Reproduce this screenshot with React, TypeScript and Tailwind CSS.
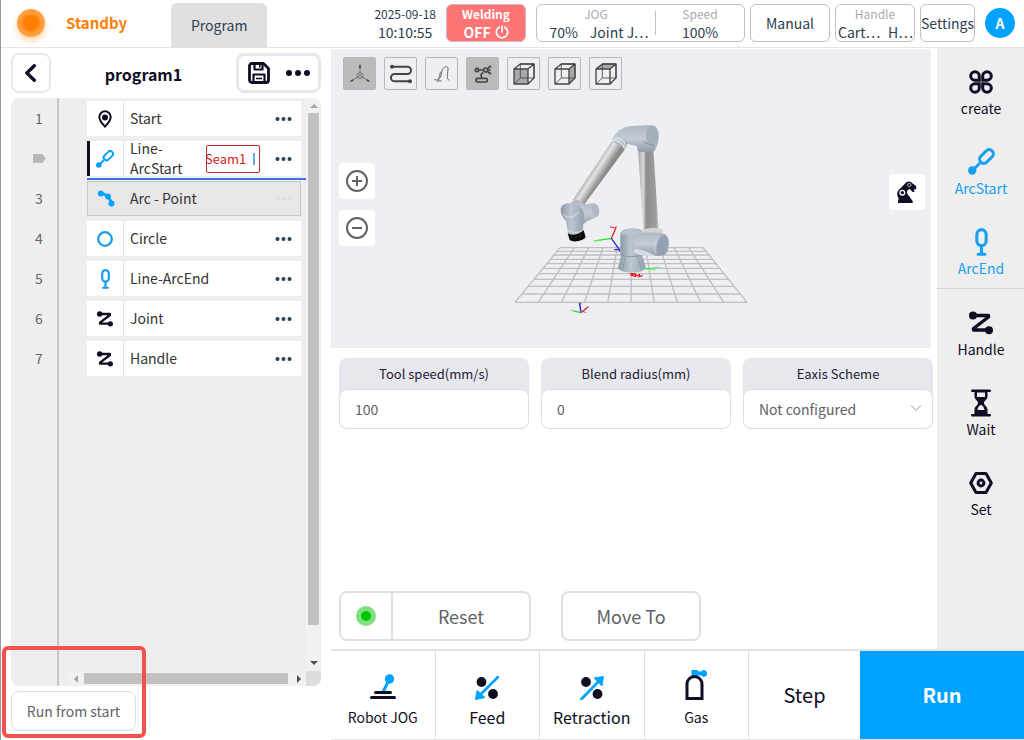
import React from 'react';
import { ChevronDown } from 'lucide-react';

type IconProps = { className?: string };

const BackIcon: React.FC = () => (
  <svg viewBox="0 0 14 20" className="w-[13px] h-5" fill="none" stroke="#0f0d23" strokeWidth="3.6" strokeLinecap="round" strokeLinejoin="round">
    <path d="M10 2.200 2 10l8 7.800" />
  </svg>
);

const SaveIcon: React.FC = () => (
  <svg viewBox="0 0 22 22" className="w-[22px] h-[22px]" fill="none" stroke="#0f0d23" strokeWidth="2.8" strokeLinejoin="round">
    <path d="M4 1.5h11.5l5 5V18a2.5 2.5 0 0 1-2.500 2.500H4A2.500 2.500 0 0 1 1.500 18V4A2.500 2.500 0 0 1 4 1.500z" />
    <path d="M6.500 2v5.500h8V2M5.500 20v-7.500h11V20" strokeWidth="2.200" />
    <path d="M11.800 3v2.500M8 16.500h6" strokeWidth="1.600" />
  </svg>
);

const DotsIcon: React.FC<IconProps> = ({ className }) => (
  <svg viewBox="0 0 24 6" className={className} fill="currentColor">
    <circle cx="3" cy="3" r="3" />
    <circle cx="12" cy="3" r="3" />
    <circle cx="21" cy="3" r="3" />
  </svg>
);

const PinIcon: React.FC<IconProps> = ({ className }) => (
  <svg viewBox="0 0 14 18" className={className} fill="none" stroke="currentColor" strokeWidth="2">
    <path d="M7 16.600C4 13.500 1.300 10.500 1.300 7a5.700 5.700 0 0 1 11.400 0c0 3.500-2.700 6.500-5.700 9.600z" />
    <circle cx="7" cy="7.500" r="3" fill="currentColor" stroke="none" />
  </svg>
);

const ArcStartIcon: React.FC<IconProps> = ({ className }) => (
  <svg viewBox="0 0 27 27" className={className} fill="none" stroke="currentColor" strokeWidth="3">
    <circle cx="4.200" cy="22.500" r="4.200" fill="currentColor" stroke="none" />
    <path d="m4 23 8-8" />
    <rect x="-8" y="-4.200" width="16" height="8.400" rx="4.200" transform="translate(18.500 8.500) rotate(-45)" />
  </svg>
);

const ArcEndIcon: React.FC<IconProps> = ({ className }) => (
  <svg viewBox="0 0 13 29" className={className} fill="none" stroke="currentColor" strokeWidth="3.200" strokeLinecap="round">
    <rect x="1.700" y="1.700" width="9.600" height="16.600" rx="4.800" />
    <path d="M6.500 19v8M3 27.200h7" />
  </svg>
);

const ArcPointIcon: React.FC<IconProps> = ({ className }) => (
  <svg viewBox="0 0 18 18" className={className} fill="none" stroke="currentColor" strokeWidth="2.800">
    <path d="M3.500 3.500C10 4 13 7 14.500 14" />
    <g fill="currentColor" stroke="none">
      <circle cx="3.800" cy="3.500" r="3" />
      <circle cx="11" cy="6.500" r="2.900" />
      <circle cx="14.500" cy="13.500" r="3" />
    </g>
  </svg>
);

const CircleIcon: React.FC<IconProps> = ({ className }) => (
  <svg viewBox="0 0 16 16" className={className} fill="none" stroke="currentColor" strokeWidth="2.300">
    <circle cx="8" cy="8" r="6.800" />
  </svg>
);

const ZigzagIcon: React.FC<IconProps> = ({ className }) => (
  <svg viewBox="0 0 24 23" className={className} fill="none" stroke="currentColor" strokeWidth="3.400" strokeLinejoin="round" strokeLinecap="round">
    <path d="M4 4h15.500v1.500L4.500 17v1.500H20" />
    <circle cx="4" cy="4" r="4" fill="currentColor" stroke="none" />
    <circle cx="20" cy="18.700" r="4" fill="currentColor" stroke="none" />
  </svg>
);

const CreateIcon: React.FC<IconProps> = ({ className }) => (
  <svg viewBox="0 0 24 24" className={className} fill="none" stroke="currentColor" strokeWidth="3">
    <path d="M10.300 10.300H6a4.300 4.300 0 1 1 4.300-4.300z" />
    <path d="M13.700 10.300H18A4.300 4.300 0 1 0 13.700 6z" />
    <path d="M10.300 13.700H6a4.300 4.300 0 1 0 4.300 4.300z" />
    <path d="M13.700 13.700H18a4.300 4.300 0 1 1-4.300 4.300z" />
  </svg>
);

const WaitIcon: React.FC<IconProps> = ({ className }) => (
  <svg viewBox="0 0 20 28" className={className}>
    <path d="M1.300 1.700h17.400M1.300 26.300h17.400" stroke="currentColor" strokeWidth="2.600" strokeLinecap="round" />
    <path d="M3.500 2h13v5.500c0 3-3.500 4-3.500 6.500s3.500 3.500 3.500 6.500V26h-13v-5.500c0-3 3.500-4 3.500-6.500S3.500 10.500 3.500 7.500z" fill="currentColor" />
    <path d="M6 3.500h8V8H6zM6.500 21c.3-2.700 2-4.500 3.500-5.200 1.500.7 3.200 2.500 3.500 5.200z" fill="#eeeeee" />
  </svg>
);

const SetIcon: React.FC<IconProps> = ({ className }) => (
  <svg viewBox="0 0 24 22" className={className} fill="none" stroke="currentColor" strokeWidth="3" strokeLinejoin="round">
    <path d="M7 1.500h10l5.300 9.500-5.300 9.500H7L1.700 11z" />
    <circle cx="12" cy="11" r="2.900" />
  </svg>
);

const PowerIcon: React.FC = () => (
  <svg viewBox="0 0 14 14" className="w-[14px] h-[14px]" fill="none" stroke="#ffffff" strokeWidth="1.600" strokeLinecap="round">
    <path d="M7 1v6M4.200 2.200a5.700 5.700 0 1 0 5.600 0" />
  </svg>
);

const AxisIcon: React.FC = () => (
  <svg viewBox="0 0 66 66" className="w-[22px] h-[22px]" fill="none" stroke="#555555" strokeWidth="2">
    <path d="M33 38V8M33 38 7 54M33 38l26 16" />
    <circle cx="33" cy="38" r="9" />
    <path d="m33 2-4 12h8zM2 57l12-3-4-6zM64 57l-12-3 4-6z" fill="#444444" stroke="none" />
  </svg>
);

const TrackIcon: React.FC = () => (
  <svg viewBox="0 0 66 60" className="w-[22px] h-5" fill="none" stroke="#444444" strokeWidth="6">
    <path d="M6 8h46a9 9 0 0 1 0 22H14a10 10 0 0 0 0 22h46" />
    <circle cx="6" cy="8" r="6" fill="#444444" stroke="none" />
    <circle cx="60" cy="52" r="6" fill="#444444" stroke="none" />
  </svg>
);

const CurveIcon: React.FC = () => (
  <svg viewBox="0 0 66 66" className="w-[22px] h-[22px]" fill="none" stroke="#666666" strokeWidth="3">
    <path d="M10 50c14 4 20-6 22-22S52 2 51 20c-1 14-6 28 4 32" />
    <path d="M20 52c7-4 5-16 9-26" stroke="#888888" strokeWidth="4" />
    <path d="M18 54h14" />
  </svg>
);

const ArmIcon: React.FC = () => (
  <svg viewBox="0 0 66 66" className="w-[22px] h-[22px]" fill="none" stroke="#444444" strokeWidth="5">
    <rect x="12" y="46" width="34" height="11" rx="5" />
    <path d="m29 46-2-11 6-7M20 21h16" />
    <circle cx="15" cy="21" r="5" />
    <circle cx="41" cy="21" r="6" />
    <path d="M58 11h-5l-5 5M58 31h-5l-5-5M48 21h8" />
  </svg>
);

const CubeIcon: React.FC<{ face: string }> = ({ face }) => (
  <svg viewBox="0 0 66 66" className="w-[22px] h-[22px]" fill="none" stroke="#444444" strokeWidth="4" strokeLinejoin="round">
    <path d={face} fill="#a8a8ac" stroke="none" />
    <path d="M22 3h41v42H22zM3 63l19-18" strokeWidth="2.500" />
    <path d="M3 18h42v45H3zM3 18 22 3h41v42L45 63M45 18 63 3" />
  </svg>
);

const GripperIcon: React.FC = () => (
  <svg viewBox="0 0 60 66" className="w-5 h-[22px]" fill="#0f0d23">
    <path d="M3 66c0-8 2-10 2-14C-2 42 0 30 8 24L28 4c6-5 15-3 18 3l11 8 1 9-8 2 3 6-6 1-9-9c-7 2-10 9-7 14l16 22v6z" />
    <circle cx="16" cy="35" r="7" fill="none" stroke="#ffffff" strokeWidth="4" />
    <circle cx="37" cy="12" r="5" fill="none" stroke="#b8b8bf" strokeWidth="3" />
  </svg>
);

const JogIcon: React.FC = () => (
  <svg viewBox="0 0 26 26" className="w-[26px] h-[26px]" fill="none" strokeLinecap="round">
    <path d="m13 18 6-12" stroke="#00a2ff" strokeWidth="3" />
    <circle cx="19.500" cy="5" r="4.700" fill="#00a2ff" />
    <path d="M5.500 18.500h15M1.500 23.500h23" stroke="#0f0d23" strokeWidth="3" />
  </svg>
);

const FeedIcon: React.FC = () => (
  <svg viewBox="0 0 24 24" className="w-6 h-6">
    <circle cx="6.500" cy="6" r="4.900" fill="#0f0d23" />
    <circle cx="18" cy="18" r="4.900" fill="#0f0d23" />
    <path d="M23 1 5 19" stroke="#00a2ff" strokeWidth="2.700" strokeLinecap="round" />
    <path d="m.5 23.500 1.500-9 8 7z" fill="#00a2ff" stroke="#00a2ff" strokeLinejoin="round" />
  </svg>
);

const RetractionIcon: React.FC = () => (
  <svg viewBox="0 0 24 24" className="w-6 h-6">
    <circle cx="6" cy="6" r="4.900" fill="#0f0d23" />
    <circle cx="17.500" cy="18" r="4.900" fill="#0f0d23" />
    <path d="M1.500 23 19 5" stroke="#00a2ff" strokeWidth="2.700" strokeLinecap="round" />
    <path d="M23.500.5 14 2l8 8z" fill="#00a2ff" stroke="#00a2ff" strokeLinejoin="round" />
  </svg>
);

const GasIcon: React.FC = () => (
  <svg viewBox="0 0 22 30" className="w-[22px] h-[30px]">
    <path d="M6.500 0h5.500l2 1.500h2.500a3.200 3.200 0 1 1 0 4h-4V7h-6z" fill="#00a2ff" />
    <path d="M2 28.500V14a7.500 7.500 0 0 1 15 0v14.500z" fill="#ffffff" stroke="#0f0d23" strokeWidth="3" />
  </svg>
);

const gridRows = [
  [413, 180, 609],
  [424, 169, 621],
  [435, 158, 630],
  [448, 149, 639],
  [461, 140, 650],
  [475, 128, 661],
  [491, 115, 674],
  [508, 101, 688],
  [529, 84, 704],
  [552, 66, 720],
  [577, 45, 741],
];

const RobotScene: React.FC = () => (
  <svg viewBox="6 0 780 660" className="w-[260px] h-[220px]" fill="none">
    <defs>
      <linearGradient id="tubeA" x1="270" y1="170" x2="310" y2="196" gradientUnits="userSpaceOnUse">
        <stop offset="0" stopColor="#8d8d8d" />
        <stop offset="0.5" stopColor="#e6e4e2" />
        <stop offset="1" stopColor="#8a8a8a" />
      </linearGradient>
      <linearGradient id="tubeB" x1="0" y1="0" x2="1" y2="0">
        <stop offset="0" stopColor="#a3a19f" />
        <stop offset="0.25" stopColor="#dedcda" />
        <stop offset="0.4" stopColor="#8f8d8c" />
        <stop offset="0.85" stopColor="#a09e9c" />
        <stop offset="1" stopColor="#c4c2c0" />
      </linearGradient>
      <linearGradient id="joint" x1="0" y1="0" x2="0" y2="1">
        <stop offset="0" stopColor="#aeb8c4" />
        <stop offset="0.5" stopColor="#c3ccd6" />
        <stop offset="1" stopColor="#8f9aa7" />
      </linearGradient>
      <linearGradient id="jointSide" x1="0" y1="0" x2="1" y2="0">
        <stop offset="0" stopColor="#8d99a7" />
        <stop offset="0.45" stopColor="#bdc7d2" />
        <stop offset="1" stopColor="#95a1af" />
      </linearGradient>
    </defs>

    <g stroke="#bfbfc2" strokeWidth="4">
      {gridRows.map(([y, from, to]) => (
        <path key={y} d={`M${from} ${y}H${to}`} />
      ))}
      {Array.from({ length: 11 }, (_, i) => (
        <path key={i} d={`M${180 + i * 42.900} 413L${45 + i * 69.600} 577`} />
      ))}
    </g>

    {/* base */}
    <path d="M364 434 354 474c8 18 74 18 84 0l-12-40z" fill="url(#jointSide)" />
    <path d="M376 442l-8 36M414 442l10 36" stroke="#8692a0" strokeWidth="2" />
    <path d="M361 370c6-18 52-20 66-8l4 70c-14 10-56 10-70 2z" fill="url(#jointSide)" />
    <path d="M362 434c14 8 54 8 68-2" stroke="#7c8896" strokeWidth="2" />
    <path d="M362 372c10-20 54-18 66-6l-32 16c-12-8-26-8-34-10z" fill="#b9c3ce" />

    {/* upper arm */}
    <path d="M414 118h46l16 244h-46z" fill="url(#tubeB)" />
    <path d="M426 362c12-10 48-12 62-2v18h-62z" fill="#d4d2cf" />
    <path d="M400 374c20-8 84-10 98 0 14 16 12 50-6 62-24 4-66-2-88-16z" fill="url(#joint)" />
    <path d="M404 416c22 2 50 12 62 22-26 2-52-2-66-12z" fill="#d6dce3" />
    <ellipse cx="488" cy="405" rx="17" ry="31" fill="#95a1af" transform="rotate(12 488 405)" />
    <path d="M470 380c-6 14-8 36-2 52" stroke="#d2d9e0" strokeWidth="2" />

    {/* forearm */}
    <path d="M338 90l38 26-124 168-34-14z" fill="url(#tubeA)" />
    <path d="M335 92c10-26 30-42 62-44l52-3c22 6 30 30 26 48-2 16-8 22-12 30-14 4-36 4-50 0l-2-14-30-8-10 14z" fill="url(#joint)" />
    <ellipse cx="457" cy="77" rx="19" ry="31" fill="#a3afbb" />
    <path d="M334 94c14-8 36 4 40 24M341 87c14-6 34 6 36 22" stroke="#f1f1f1" strokeWidth="3" />
    <path d="M374 116c6-4 6-14 5-20M430 96c8 4 24 8 32 10" stroke="#6f7b88" strokeWidth="2" />

    {/* wrist */}
    <path d="M212 280c12-12 24-14 36 0 14 6 20-2 34 0 16 4 20 22 14 34-12 14-38 16-52 34z" fill="url(#joint)" />
    <path d="M182 300c0-16 18-24 36-18 20 2 34 16 34 34l-4 48c-8 12-36 14-44 4l-6-36c-10-8-16-20-16-32z" fill="url(#jointSide)" />
    <path d="M190 312c10 16 36 12 46-8M204 360c10 10 34 10 44 0" stroke="#dfe4e9" strokeWidth="3" />
    <ellipse cx="286" cy="302" rx="10" ry="19" fill="#aeb9c5" transform="rotate(-18 286 302)" />
    <path d="M203 370c12 8 36 4 48-10l6 22c-10 12-38 16-48 8z" fill="#0a0a0a" />
    <path d="M212 382l4-4M226 384l4-6M238 380l4-6" stroke="#666666" strokeWidth="2" />

    {/* coordinate frames */}
    <g strokeWidth="4">
      <path d="M334 385l14-32" stroke="#e8202a" />
      <path d="M330 350l12 4 8-4" stroke="#e8202a" strokeWidth="3" />
      <path d="M334 385l-40 6" stroke="#21e321" />
      <path d="M282 392h14" stroke="#6ae86a" />
      <path d="M334 385l26 36" stroke="#2020e0" />
      <path d="M342 419h12l6 4" stroke="#2020a0" strokeWidth="3" />
      <path d="M436 476h24" stroke="#35e835" />
      <path d="M458 470l10 6-10 5M464 472h18" stroke="#7be87b" strokeWidth="3" />
      <path d="M390 491h12l-8 5 12 3v-6l6 5 6-4v6l10-4" stroke="#ee1c25" strokeWidth="4" />
      <path d="M243 608l-4-28" stroke="#1a1ae0" />
      <path d="M243 608l-26-6" stroke="#21e321" />
      <path d="M243 608l20-16" stroke="#e8202a" />
      <path d="M209 601l12 1" stroke="#9ae89a" strokeWidth="3" />
      <path d="M236 582h8l-4-4zM248 604l10 4M260 590l8 2" stroke="#555555" strokeWidth="2" />
    </g>
  </svg>
);

const views = [
  { label: 'Axes', icon: <AxisIcon />, active: true },
  { label: 'Path', icon: <TrackIcon />, active: false },
  { label: 'Trajectory', icon: <CurveIcon />, active: false },
  { label: 'Robot', icon: <ArmIcon />, active: true },
  { label: 'Front view', icon: <CubeIcon face="M3 18h42v45H3z" />, active: false },
  { label: 'Side view', icon: <CubeIcon face="M45 18 63 3v42L45 63z" />, active: false },
  { label: 'Top view', icon: <CubeIcon face="M3 18 22 3h41L45 18z" />, active: false },
];

const steps = [
  { name: 'Start', icon: <PinIcon className="w-[14px] h-[18px] text-[#0f0d23]" /> },
  { name: 'Line-ArcStart', icon: <ArcStartIcon className="w-[18px] h-[18px] text-[#00a2ff]" />, selected: true, seam: 'Seam1' },
  { name: 'Arc - Point', icon: <ArcPointIcon className="w-[18px] h-[18px] text-[#00a2ff]" />, dragging: true },
  { name: 'Circle', icon: <CircleIcon className="w-4 h-4 text-[#1c9df0]" /> },
  { name: 'Line-ArcEnd', icon: <ArcEndIcon className="w-[9px] h-5 text-[#1c9df0]" /> },
  { name: 'Joint', icon: <ZigzagIcon className="w-4 h-4 text-[#0f0d23]" /> },
  { name: 'Handle', icon: <ZigzagIcon className="w-4 h-4 text-[#0f0d23]" /> },
];

const tools = [
  [
    { name: 'create', icon: <CreateIcon className="w-6 h-6" />, color: 'text-[#0f0d23]' },
    { name: 'ArcStart', icon: <ArcStartIcon className="w-[27px] h-[27px]" />, color: 'text-[#18a0f0]' },
    { name: 'ArcEnd', icon: <ArcEndIcon className="w-[13px] h-7" />, color: 'text-[#18a0f0]' },
  ],
  [
    { name: 'Handle', icon: <ZigzagIcon className="w-6 h-6" />, color: 'text-[#0f0d23]' },
    { name: 'Wait', icon: <WaitIcon className="w-5 h-7" />, color: 'text-[#0f0d23]' },
    { name: 'Set', icon: <SetIcon className="w-6 h-[22px]" />, color: 'text-[#0f0d23]' },
  ],
];

const actions = [
  { name: 'Robot JOG', icon: <JogIcon />, size: 'text-[14px]' },
  { name: 'Feed', icon: <FeedIcon />, size: 'text-[16px]' },
  { name: 'Retraction', icon: <RetractionIcon />, size: 'text-[16px]' },
  { name: 'Gas', icon: <GasIcon />, size: 'text-[14px]' },
];

const TopBar: React.FC = () => (
  <header className="h-12 flex items-center border-b border-[#e4e4e4] pl-4 pr-[9px] pb-[2px] text-[#2c3e50] leading-[18px]">
    <div className="w-7 h-7 rounded-full bg-[#ffa348] flex items-center justify-center shadow-[0_4px_6px_#ffd9b0]">
      <div className="w-4 h-4 rounded-full bg-[#ff7f00] shadow-[0_0_4px_2px_#ff8c1a]" />
    </div>
    <span className="ml-[21px] text-[15px] font-bold text-[#ff8008]">Standby</span>
    <button className="self-end ml-11 -mb-[2px] w-24 h-11 rounded-t-md bg-[#e0e0e0] text-[14px]">Program</button>

    <div className="ml-auto mr-[10px] text-center">
      <div className="text-[12px]">2025-09-18</div>
      <div className="text-[14px]">10:10:55</div>
    </div>
    <div className="flex items-center gap-[5px]">
      <button className="w-20 h-[38px] mr-[5px] rounded-md border border-[#d0b8b8] bg-[#ff7474] text-white font-bold text-[12px]">
        <span className="block">Welding</span>
        <span className="flex items-center justify-center gap-1 text-[14px]">
          OFF <PowerIcon />
        </span>
      </button>
      <div className="w-[209px] h-[38px] flex items-center rounded-md border border-[#c0c0c4] text-center text-[14px] whitespace-nowrap">
        <div className="w-[119px] h-6 border-r border-[#c0c0c4] flex flex-col justify-center">
          <div className="text-[12px] text-[#a8abb2]">JOG</div>
          <div className="flex justify-center gap-3 pl-[6px]">
            <span>70%</span>
            <span>Joint J⋯</span>
          </div>
        </div>
        <div className="flex-1">
          <div className="text-[12px] text-[#a8abb2]">Speed</div>
          <div>100%</div>
        </div>
      </div>
      <button className="w-20 h-[38px] rounded-md border border-[#c0c0c4] text-[14px]">Manual</button>
      <div className="w-20 h-[38px] rounded-md border border-[#c0c0c4] text-center text-[14px] whitespace-nowrap">
        <div className="text-[12px] text-[#a8abb2]">Handle</div>
        <div className="flex justify-between pl-[2px] pr-px">
          <span>Cart⋯</span>
          <span>H⋯</span>
        </div>
      </div>
      <button className="w-[55px] h-[38px] rounded-md border border-[#c0c0c4] text-[14px]">Settings</button>
      <button className="ml-[5px] w-[30px] h-[30px] rounded-full bg-[#00a2ff] text-white font-bold text-[14px]">A</button>
    </div>
  </header>
);

const ProgramPanel: React.FC = () => (
  <aside className="relative w-[330px] shrink-0 flex flex-col pl-[10px] pr-[10px]">
    <div className="h-[50px] flex items-center justify-between">
      <button aria-label="Back" className="w-10 h-10 rounded-lg border-2 border-[#e7e8ee] flex items-center justify-center">
        <BackIcon />
      </button>
      <h1 className="pt-[2px] text-[16px] font-bold text-[#0f0d23]">program1</h1>
      <div className="w-[85px] h-10 rounded-lg border-3 border-[#e7e8ee] flex items-center justify-center gap-4">
        <button aria-label="Save"><SaveIcon /></button>
        <button aria-label="More"><DotsIcon className="w-6 h-[6px] text-[#0f0d23]" /></button>
      </div>
    </div>

    <div className="flex-1 flex rounded-lg overflow-hidden bg-[#eeeeee]">
      <div className="w-12 shrink-0 border-r-2 border-[#c8c8c8] pt-px text-[14px] text-[#666666]">
        {steps.map((step, idx) => (
          <div key={idx} className="h-10 flex items-center justify-center pl-[10px] pb-[2px]">
            {step.selected ? (
              <svg viewBox="0 0 13 9" className="w-[13px] h-[9px]" aria-label="Current step">
                <path d="M0 0h9l4 4.500L9 9H0z" fill="#b8b8b8" />
              </svg>
            ) : (
              idx + 1
            )}
          </div>
        ))}
      </div>

      <div className="flex-1 flex flex-col">
        <ul className="flex-1 flex flex-col gap-[5px] pt-[3px] pl-7 pr-[5px] text-[14px] leading-5 text-[#333333]">
          {steps.map((step, idx) => (
            <li
              key={idx}
              className={`relative h-[35px] flex items-center ${step.dragging ? 'bg-[#e7e7e7] outline outline-[#c8c8c8] -outline-offset-1' : 'bg-white'} ${step.selected ? 'shadow-[inset_3px_0_0_#0f0d23]' : ''}`}
            >
              <div className={`w-[37px] h-full shrink-0 flex items-center justify-center ${step.dragging ? '' : 'border-r border-[#e4e4e4]'}`}>
                {step.icon}
              </div>
              <span className={`pl-[6px] pb-[2px] ${step.seam ? 'w-[82px] pr-4' : 'flex-1'}`}>{step.name}</span>
              {step.seam && (
                <button className="w-[54px] h-7 rounded-xs border border-[#c22a2a] text-[13px] text-[#d01c1c] flex items-center justify-between pr-1">
                  <span className="-ml-[2px]">{step.seam}</span>
                  <span className="w-[2px] h-3 bg-[#6aa9e0]" />
                </button>
              )}
              <button aria-label={`${step.name} options`} className="ml-auto mr-[9px]">
                <DotsIcon className={`w-[17px] h-1 ${step.dragging ? 'text-[#dcdcdc]' : 'text-[#2c3e50]'}`} />
              </button>
              {step.selected && <div className="absolute left-0 -right-[5px] -bottom-1 z-10 h-[2px] bg-[#4073e6]" />}
            </li>
          ))}
        </ul>
        <div className="h-[15px] ml-[9px] flex items-center pl-[6px] pr-[5px] bg-[#f1f1f1]">
          <span className="border-y-4 border-y-transparent border-r-4 border-r-[#a3a3a3]" />
          <span className="flex-1 h-[11px] mr-[9px] ml-[6px] bg-[#c1c1c1]" />
          <span className="border-y-4 border-y-transparent border-l-4 border-l-[#505050]" />
        </div>
      </div>

      <div className="w-[15px] flex flex-col items-center bg-[#f1f1f1]">
        <span className="mt-[6px] border-x-4 border-x-transparent border-b-4 border-b-[#a3a3a3]" />
        <span className="flex-1 w-[11px] mt-[5px] mb-9 bg-[#c1c1c1]" />
        <span className="mb-[6px] border-x-4 border-x-transparent border-t-4 border-t-[#505050]" />
        <span className="w-full h-[15px] bg-[#dcdcdc]" />
      </div>
    </div>

    <div className="h-[54px] pt-[5px]">
      <button className="w-[125px] h-10 rounded-lg border border-[#dcdfe6] text-[14px] text-[#606266]">Run from start</button>
    </div>
    <div className="absolute left-px bottom-[2px] w-[144px] h-[92px] rounded-md border-4 border-[#f2514c] pointer-events-none" />
  </aside>
);

const Viewer: React.FC = () => (
  <section className="h-[300px] mr-[6px] border-t border-white bg-[#eeeff3] pt-2">
    <div className="flex gap-2 pl-3">
      {views.map((view) => (
        <button
          key={view.label}
          aria-label={view.label}
          className={`w-[33px] h-[33px] rounded-xs border border-[#b8b8b8] flex items-center justify-center ${view.active ? 'bg-[#bbbbbb]' : ''}`}
        >
          {view.icon}
        </button>
      ))}
    </div>
    <div className="flex justify-between pl-2 pr-[6px] pt-5">
      <div className="flex flex-col gap-[11px] pt-[53px]">
        <button aria-label="Zoom in" className="w-9 h-9 rounded bg-white flex items-center justify-center">
          <svg viewBox="0 0 22 22" className="w-[22px] h-[22px]" fill="none" stroke="#606266" strokeWidth="2">
            <circle cx="11" cy="11" r="10" />
            <path d="M11 6v10M6 11h10" />
          </svg>
        </button>
        <button aria-label="Zoom out" className="w-9 h-9 rounded bg-white flex items-center justify-center">
          <svg viewBox="0 0 22 22" className="w-[22px] h-[22px]" fill="none" stroke="#606266" strokeWidth="2">
            <circle cx="11" cy="11" r="10" />
            <path d="M6 11h10" />
          </svg>
        </button>
      </div>
      <RobotScene />
      <div className="pt-16">
        <button aria-label="Posture" className="w-9 h-9 rounded bg-white flex items-center justify-center">
          <GripperIcon />
        </button>
      </div>
    </div>
  </section>
);

const fieldBox = 'block w-full h-10 px-[15px] rounded-lg border border-[#dcdfe6] bg-white text-[14px] text-[#606266]';

const Parameters: React.FC = () => (
  <div className="grid grid-cols-3 gap-3 mt-[10px] pl-2 pr-1 text-[13px] text-[#1c1b2e] text-center">
    <div className="rounded-lg bg-[#e7e8ee]">
      <label htmlFor="speed" className="block h-[31px] leading-8">Tool speed(mm/s)</label>
      <input id="speed" defaultValue="100" className={fieldBox} />
    </div>
    <div className="rounded-lg bg-[#e7e8ee]">
      <label htmlFor="radius" className="block h-[31px] leading-8">Blend radius(mm)</label>
      <input id="radius" defaultValue="0" className={fieldBox} />
    </div>
    <div className="relative rounded-lg bg-[#e7e8ee]">
      <label htmlFor="scheme" className="block h-[31px] leading-8">Eaxis Scheme</label>
      <select id="scheme" className={`${fieldBox} appearance-none`}>
        <option>Not configured</option>
      </select>
      <ChevronDown className="absolute right-2 bottom-3 w-[18px] h-[18px] text-[#c0c4cc] pointer-events-none" strokeWidth={1.5} />
    </div>
  </div>
);

const App: React.FC = () => (
  <div className="min-h-screen flex bg-white font-['Noto_Sans_CJK_SC',sans-serif]">
    <div className="w-px shrink-0 bg-[#9a9a9a]" />
    <div className="flex-1 min-w-0 flex flex-col">
      <TopBar />
      <div className="flex-1 flex">
        <ProgramPanel />
        <div className="flex-1 flex flex-col">
          <div className="flex-1 flex">
            <main className="flex-1 flex flex-col">
              <Viewer />
              <Parameters />
              <div className="mt-auto mb-2 ml-2 flex gap-[30px] text-[18px] text-[#606266]">
                <div className="w-48 h-[50px] flex rounded-lg border-2 border-[#dcdfe6]">
                  <div className="w-[52px] border-r-2 border-[#dcdfe6] flex items-center justify-center">
                    <span className="w-5 h-5 rounded-full border-5 border-[#80e080] bg-[#00c800]" />
                  </div>
                  <button className="flex-1">Reset</button>
                </div>
                <button className="w-[140px] h-[50px] rounded-lg border-2 border-[#dcdfe6]">Move To</button>
              </div>
            </main>
            <nav className="w-[87px] flex flex-col bg-[#eeeeee]">
              {tools.map((group, idx) => (
                <div key={idx} className={`flex flex-col gap-[14px] pt-[13px] ${idx ? 'border-t border-[#d4d4d8]' : 'pb-px'}`}>
                  {group.map((tool) => (
                    <button key={tool.name} className={`h-[66px] flex flex-col items-center justify-center pl-px pb-px text-[14px] leading-6 ${tool.color}`}>
                      <span className="h-7 flex items-center">{tool.icon}</span>
                      {tool.name}
                    </button>
                  ))}
                </div>
              ))}
            </nav>
          </div>
          <footer className="flex border-t-2 border-b border-[#e4e4e6] h-[91px] text-[#0f0d23]">
            <div className="flex-1 grid grid-cols-4">
              {actions.map((action) => (
                <button key={action.name} className={`border-r border-[#dcdfe3] flex flex-col items-center justify-end gap-[5px] pb-[10px] leading-6 ${action.size}`}>
                  {action.icon}
                  {action.name}
                </button>
              ))}
            </div>
            <button className="w-[111px] text-[20px]">Step</button>
            <button className="w-[164px] bg-[#00a2ff] text-[20px] font-bold text-white">Run</button>
          </footer>
        </div>
      </div>
    </div>
  </div>
);

export default App;
